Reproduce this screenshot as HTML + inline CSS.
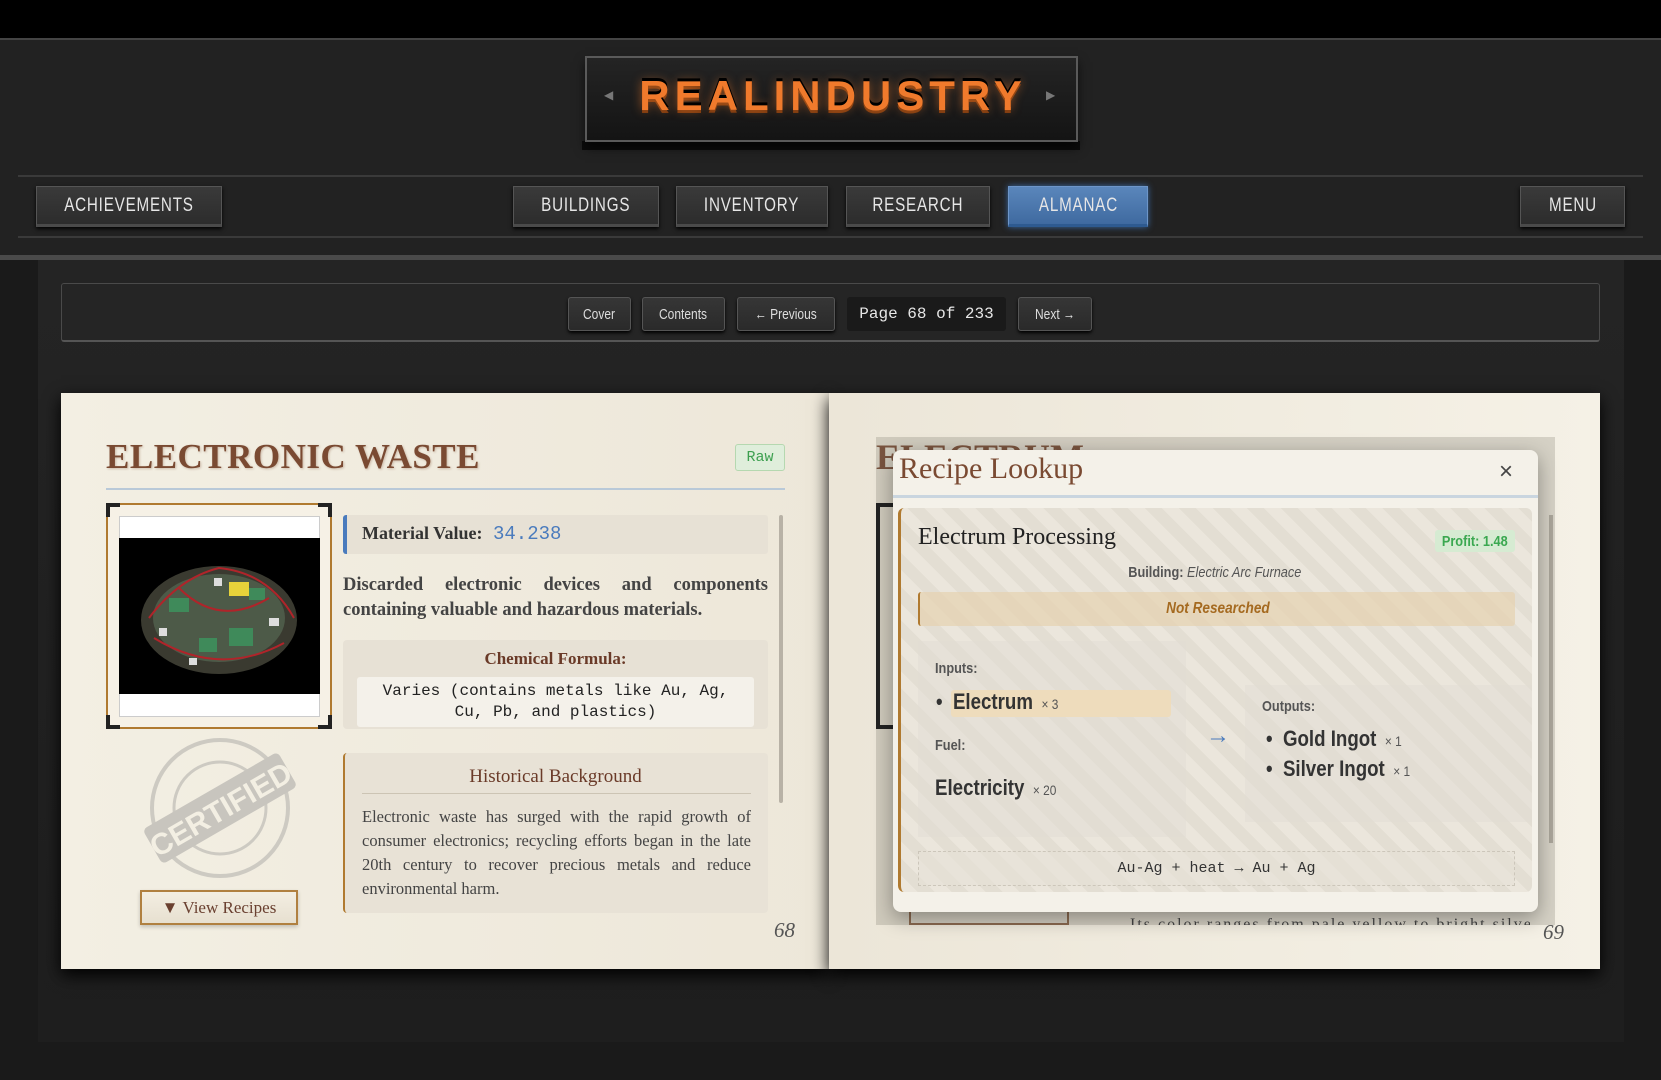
<!DOCTYPE html>
<html><head><meta charset="utf-8"><style>
*{margin:0;padding:0;box-sizing:border-box}
body{width:1661px;height:1080px;background:#1a1a1a;position:relative;overflow:hidden;font-family:"Liberation Sans",sans-serif}
.a{position:absolute}
.nb{position:absolute;top:186px;height:41px;background:linear-gradient(#3a3a3a,#2c2c2c);border:1px solid #555;border-bottom:3px solid #4a4a4a;color:#e6e6e6;font-size:19px;letter-spacing:1px;display:flex;align-items:center;justify-content:center;box-shadow:0 2px 4px #000}
.nb span,.tb span{display:inline-block;transform:scaleX(.8)}
.tb{position:absolute;top:297px;height:34px;background:linear-gradient(#363636,#2a2a2a);border:1px solid #555;border-radius:3px;color:#ddd;font-size:15px;display:flex;align-items:center;justify-content:center;box-shadow:0 2px 3px #000;white-space:nowrap}
.serif{font-family:"Liberation Serif",serif}
.cond{transform:scaleX(.85);transform-origin:left center;white-space:nowrap}
.mono{font-family:"Liberation Mono",monospace}
</style></head><body>
<div class="a" style="left:0;top:0;width:1661px;height:38px;background:#000"></div>
<div class="a" style="left:0;top:38px;width:1661px;height:219px;background:#222;border-top:2px solid #444"></div>
<div class="a" style="left:582px;top:141px;width:498px;height:9px;background:#0c0c0c"></div>
<div class="a" style="left:585px;top:56px;width:493px;height:86px;background:linear-gradient(#242424,#141414);border:2px solid #5a5a5a;box-shadow:0 6px 10px rgba(0,0,0,.6)"></div>
<div class="a" style="left:604px;top:88px;color:#777;font-size:12px">◀</div>
<div class="a" style="left:1046px;top:88px;color:#777;font-size:12px">▶</div>
<div class="a" style="left:628px;top:72px;width:410px;text-align:center;font-weight:bold;font-size:42px;letter-spacing:5px;color:#f07a2c;text-shadow:0 -3px 0 #000,0 0 10px rgba(240,120,40,.6),0 3px 0 #7a3a10">REALINDUSTRY</div>
<div class="a" style="left:18px;top:175px;width:1625px;height:2px;background:#3a3a3a"></div>
<div class="a" style="left:18px;top:236px;width:1625px;height:2px;background:#3a3a3a"></div>
<div class="nb" style="left:36px;width:186px"><span>ACHIEVEMENTS</span></div>
<div class="nb" style="left:513px;width:146px"><span>BUILDINGS</span></div>
<div class="nb" style="left:676px;width:152px"><span>INVENTORY</span></div>
<div class="nb" style="left:846px;width:144px"><span>RESEARCH</span></div>
<div class="nb" style="left:1008px;width:140px;background:linear-gradient(#5a86bb,#3f6aa0);border-color:#6d95c8;border-bottom-color:#2e5a90;box-shadow:0 0 6px #3b6aa5"><span>ALMANAC</span></div>
<div class="nb" style="left:1520px;width:105px"><span>MENU</span></div>
<div class="a" style="left:0;top:255px;width:1661px;height:5px;background:#4a4a4a"></div>
<div class="a" style="left:38px;top:260px;width:1586px;height:782px;background:linear-gradient(#242424,#1e1e1e)"></div>
<div class="a" style="left:61px;top:283px;width:1539px;height:59px;background:#252525;border:1px solid #4a4a4a;border-bottom:2px solid #555;border-radius:3px"></div>
<div class="tb" style="left:568px;width:63px"><span>Cover</span></div>
<div class="tb" style="left:642px;width:83px"><span>Contents</span></div>
<div class="tb" style="left:737px;width:98px"><span>← Previous</span></div>
<div class="a mono" style="left:847px;top:297px;width:159px;height:34px;background:#1a1a1a;border-radius:3px;color:#e6e6e6;font-size:16px;display:flex;align-items:center;justify-content:center">Page 68 of 233</div>
<div class="tb" style="left:1018px;width:74px"><span>Next →</span></div>
<div class="a" style="left:61px;top:393px;width:768px;height:576px;background:linear-gradient(90deg,#f3efe3,#ede7d9);box-shadow:0 6px 16px #000"></div>
<div class="a" style="left:829px;top:393px;width:771px;height:576px;background:linear-gradient(90deg,#ece6d8,#f5f1e6);box-shadow:0 6px 16px #000"></div>
<div class="a serif" style="left:106px;top:437px;font-size:35px;font-weight:bold;color:#7a4a32;letter-spacing:0.5px;text-shadow:1px 1px 2px rgba(120,70,40,.3)">ELECTRONIC WASTE</div>
<div class="a mono" style="left:735px;top:444px;width:50px;height:27px;background:#dfeedb;border:1px solid #b5d8b0;border-radius:3px;color:#3da050;font-size:15px;display:flex;align-items:center;justify-content:center">Raw</div>
<div class="a" style="left:106px;top:488px;width:679px;height:2px;background:#b9c9d8"></div>
<div class="a" style="left:106px;top:503px;width:226px;height:226px;border:2px solid #b07a30;background:#f6f1e6"></div>
<div class="a" style="left:106px;top:503px;width:14px;height:14px;border-left:4px solid #222;border-top:4px solid #222"></div>
<div class="a" style="left:318px;top:503px;width:14px;height:14px;border-right:4px solid #222;border-top:4px solid #222"></div>
<div class="a" style="left:106px;top:715px;width:14px;height:14px;border-left:4px solid #222;border-bottom:4px solid #222"></div>
<div class="a" style="left:318px;top:715px;width:14px;height:14px;border-right:4px solid #222;border-bottom:4px solid #222"></div>
<div class="a" style="left:119px;top:516px;width:201px;height:201px;background:#fff;border:1px solid #ccc"></div>
<div class="a" style="left:119px;top:538px;width:201px;height:156px;background:#000"></div>
<svg class="a" style="left:119px;top:538px" width="201" height="156"><ellipse cx="100" cy="82" rx="78" ry="54" fill="#3a3a30"/><ellipse cx="100" cy="80" rx="66" ry="44" fill="#4d5a48"/><g fill="#3f8a5a"><rect x="50" y="60" width="20" height="14"/><rect x="110" y="90" width="24" height="18"/><rect x="80" y="100" width="18" height="14"/><rect x="130" y="50" width="16" height="12"/></g><rect x="110" y="44" width="20" height="14" fill="#e6d23a"/><g fill="#ddd"><rect x="40" y="90" width="8" height="8"/><rect x="150" y="80" width="10" height="8"/><rect x="95" y="40" width="8" height="8"/><rect x="70" y="120" width="8" height="7"/></g><path d="M30 80 Q60 40 100 30 Q150 35 175 80 M35 100 Q100 140 165 105 M60 50 Q100 90 150 60" stroke="#b0242a" stroke-width="2" fill="none"/></svg>
<svg class="a" style="left:140px;top:730px" width="160" height="160"><circle cx="80" cy="78" r="68" fill="none" stroke="#cdcac2" stroke-width="4"/><circle cx="80" cy="78" r="46" fill="none" stroke="#cdcac2" stroke-width="3"/><g transform="rotate(-30 80 78)"><rect x="2" y="58" width="156" height="40" rx="5" fill="#c8c5be"/><text x="80" y="90" text-anchor="middle" font-family="Liberation Sans" font-weight="bold" font-size="30" fill="#f3efe3">CERTIFIED</text></g></svg>
<div class="a serif" style="left:140px;top:890px;width:158px;height:35px;border:2px solid #b08040;background:linear-gradient(#f3eee2,#e7e0d0);color:#6a4030;font-size:17px;display:flex;align-items:center;justify-content:center;box-shadow:0 2px 4px rgba(0,0,0,.2)">▼ View Recipes</div>
<div class="a" style="left:343px;top:515px;width:425px;height:39px;background:#e7e1d5;border-left:4px solid #4a7bbd;border-radius:3px"></div>
<div class="a serif" style="left:362px;top:523px;font-size:18px;font-weight:bold;color:#333">Material Value: <span class="mono" style="color:#4a7bbd;font-weight:normal;font-size:19px;margin-left:6px">34.238</span></div>
<div class="a serif" style="left:343px;top:573px;width:425px;font-size:18.5px;line-height:25px;color:#444;text-align:justify;font-weight:bold">Discarded electronic devices and components containing valuable and hazardous materials.</div>
<div class="a" style="left:343px;top:640px;width:425px;height:89px;background:#e7e1d5;border-radius:4px"></div>
<div class="a serif" style="left:343px;top:649px;width:425px;text-align:center;font-size:17px;color:#6a3a28;font-weight:bold">Chemical Formula:</div>
<div class="a mono" style="left:357px;top:677px;width:397px;height:50px;background:#f4f1ea;border-radius:3px;font-size:16px;line-height:21px;text-align:center;color:#222;padding-top:4px">Varies (contains metals like Au, Ag,<br>Cu, Pb, and plastics)</div>
<div class="a" style="left:343px;top:753px;width:425px;height:160px;background:#e8e2d6;border-left:2px solid #b07a30;border-radius:4px"></div>
<div class="a serif" style="left:343px;top:766px;width:425px;text-align:center;font-size:19px;color:#6a3a28">Historical Background</div>
<div class="a" style="left:362px;top:793px;width:389px;height:1px;background:#ccc4b4"></div>
<div class="a serif" style="left:362px;top:805px;width:389px;font-size:16.5px;line-height:24px;color:#444;text-align:justify">Electronic waste has surged with the rapid growth of consumer electronics; recycling efforts began in the late 20th century to recover precious metals and reduce environmental harm.</div>
<div class="a" style="left:779px;top:515px;width:4px;height:288px;background:#b8b2a6;border-radius:2px"></div>
<div class="a serif" style="left:774px;top:918px;font-size:21px;font-style:italic;color:#555">68</div>
<div class="a serif" style="left:876px;top:436px;font-size:36px;font-weight:bold;color:#7a4a32">ELECTRUM</div>
<div class="a" style="left:876px;top:437px;width:679px;height:488px;background:rgba(120,115,105,.25)"></div>
<div class="a" style="left:876px;top:503px;width:20px;height:226px;border:4px solid #222;border-right:none"></div>
<div class="a" style="left:1549px;top:515px;width:4px;height:328px;background:#aaa59a"></div>
<div class="a" style="left:909px;top:900px;width:160px;height:25px;border:2px solid #8a6a50;border-top:none"></div>
<div class="a serif" style="left:1130px;top:916px;font-size:16px;color:#444;letter-spacing:2px;height:9px;overflow:hidden;width:400px;white-space:nowrap">Its color ranges from pale yellow to bright silver</div>
<div class="a serif" style="left:1543px;top:920px;font-size:21px;font-style:italic;color:#555">69</div>
<div class="a" style="left:893px;top:450px;width:645px;height:462px;background:#f4f1e9;border-radius:8px;box-shadow:0 6px 20px rgba(0,0,0,.35)"></div>
<div class="a serif" style="left:899px;top:452px;font-size:30px;color:#7a4a32">Recipe Lookup</div>
<div class="a" style="left:1499px;top:458px;font-size:24px;color:#444">×</div>
<div class="a" style="left:893px;top:495px;width:645px;height:3px;background:#c9d5df"></div>
<div class="a" style="left:898px;top:508px;width:634px;height:384px;border-left:3px solid #b07a30;border-radius:6px;background:repeating-linear-gradient(45deg,#ebe6dc 0 12px,#e3ded3 12px 24px)"></div>
<div class="a serif" style="left:918px;top:524px;font-size:24px;color:#222">Electrum Processing</div>
<div class="a" style="left:1435px;top:530px;width:80px;height:22px;background:#d6ebd2;border-radius:3px;color:#3aa850;font-size:15px;font-weight:bold;display:flex;align-items:center;justify-content:center"><span style="display:inline-block;transform:scaleX(.85)">Profit: 1.48</span></div>
<div class="a" style="left:898px;top:564px;width:634px;text-align:center;font-size:15px;color:#555"><span style="display:inline-block;transform:scaleX(.85)"><b>Building:</b> <i>Electric Arc Furnace</i></span></div>
<div class="a" style="left:918px;top:592px;width:597px;height:34px;background:rgba(230,210,175,.7);border-left:2px solid #b07a30;border-radius:3px;color:#a56a20;font-size:16px;font-weight:bold;font-style:italic;display:flex;align-items:center;justify-content:center"><span style="display:inline-block;transform:scaleX(.85)">Not Researched</span></div>
<div class="a" style="left:918px;top:641px;width:268px;height:196px;background:rgba(225,220,210,.45)"></div>
<div class="a cond" style="left:935px;top:660px;font-size:15px;color:#555;font-weight:bold">Inputs:</div>
<div class="a" style="left:951px;top:690px;width:220px;height:27px;background:#eedcbc;border-radius:3px"></div>
<div class="a cond" style="left:936px;top:689px;font-size:22px;color:#333;font-weight:bold">•&nbsp; Electrum <span style="font-size:14px;font-weight:normal;color:#555">&nbsp;× 3</span></div>
<div class="a cond" style="left:935px;top:737px;font-size:15px;color:#555;font-weight:bold">Fuel:</div>
<div class="a cond" style="left:935px;top:775px;font-size:22px;color:#333;font-weight:bold">Electricity <span style="font-size:14px;font-weight:normal;color:#555">&nbsp;× 20</span></div>
<div class="a" style="left:1206px;top:722px;font-size:24px;color:#4a7bbd;font-weight:bold">→</div>
<div class="a" style="left:1245px;top:685px;width:287px;height:137px;background:rgba(225,220,210,.45)"></div>
<div class="a cond" style="left:1262px;top:698px;font-size:15px;color:#555;font-weight:bold">Outputs:</div>
<div class="a cond" style="left:1266px;top:725px;font-size:22px;color:#333;font-weight:bold;line-height:27px">•&nbsp; Gold Ingot <span style="font-size:14px;font-weight:normal;color:#555">&nbsp;× 1</span><br>•&nbsp; Silver Ingot <span style="font-size:14px;font-weight:normal;color:#555">&nbsp;× 1</span></div>
<div class="a mono" style="left:918px;top:851px;width:597px;height:35px;border:1px dashed #ccc6ba;background:rgba(230,225,215,.6);font-size:15px;color:#333;display:flex;align-items:center;justify-content:center">Au-Ag + heat → Au + Ag</div>
</body></html>
